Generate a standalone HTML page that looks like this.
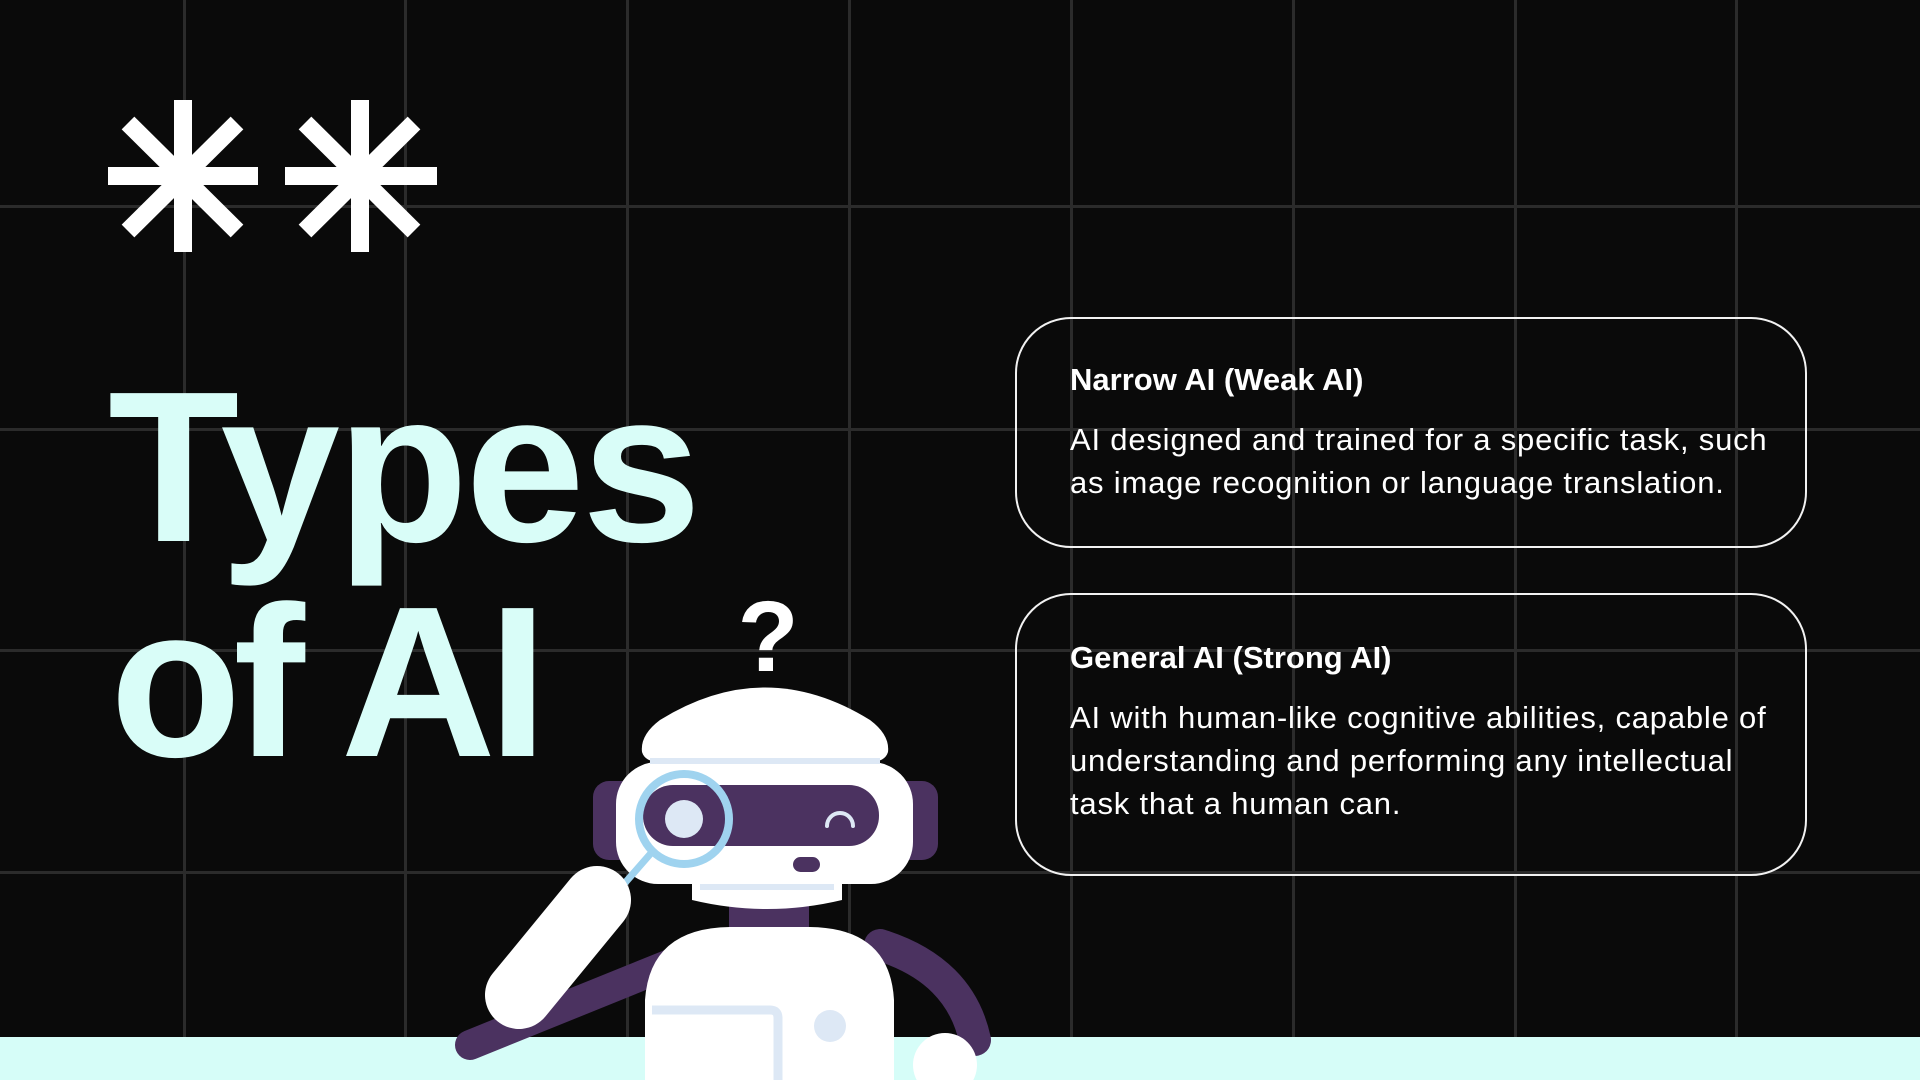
<!DOCTYPE html>
<html><head><meta charset="utf-8"><style>
html,body{margin:0;padding:0;}
body{width:1920px;height:1080px;overflow:hidden;background:#0a0a0a;position:relative;font-family:"Liberation Sans",sans-serif;}
.v{position:absolute;top:0;width:3px;height:1080px;background:#2b2b2b;}
.h{position:absolute;left:0;height:3px;width:1920px;background:#2b2b2b;}
.big{position:absolute;color:#d9fdf8;font-weight:bold;font-size:215px;letter-spacing:-6px;white-space:nowrap;line-height:1;}
.card{position:absolute;left:1015px;width:792px;border:2px solid #f2f2f2;border-radius:56px;box-sizing:border-box;}
.t{position:absolute;color:#fff;white-space:nowrap;}
.tt{font-weight:bold;font-size:31px;}
.bd{font-size:31px;letter-spacing:0.8px;}
</style></head><body>
<div class="v" style="left:183px"></div><div class="v" style="left:404px"></div><div class="v" style="left:626px"></div><div class="v" style="left:848px"></div><div class="v" style="left:1070px"></div><div class="v" style="left:1292px"></div><div class="v" style="left:1514px"></div><div class="v" style="left:1735px"></div>
<div class="h" style="top:205px"></div><div class="h" style="top:428px"></div><div class="h" style="top:649px"></div><div class="h" style="top:871px"></div>

<svg style="position:absolute;left:0;top:0" width="1920" height="1080">
<g stroke="#fff" stroke-width="18">
<line x1="183" y1="100" x2="183" y2="252"/><line x1="108" y1="176" x2="258" y2="176"/>
<line x1="128" y1="123" x2="237" y2="231"/><line x1="237" y1="123" x2="128" y2="231"/>
<line x1="360" y1="100" x2="360" y2="252"/><line x1="285" y1="176" x2="437" y2="176"/>
<line x1="305" y1="123" x2="414" y2="231"/><line x1="414" y1="123" x2="305" y2="231"/>
</g>
</svg>

<div class="big" style="left:108px;top:359px;letter-spacing:-3px">Types</div>
<div class="big" style="left:110px;top:574px;letter-spacing:-8px">of AI</div>

<div class="card" style="top:317px;height:231px"></div>
<div class="card" style="top:593px;height:283px"></div>
<div class="t tt" style="left:1070px;top:362px">Narrow AI (Weak AI)</div>
<div class="t bd" style="left:1070px;top:422px">AI designed and trained for a specific task, such</div>
<div class="t bd" style="left:1070px;top:465px">as image recognition or language translation.</div>
<div class="t tt" style="left:1070px;top:640px">General AI (Strong AI)</div>
<div class="t bd" style="left:1070px;top:700px">AI with human-like cognitive abilities, capable of</div>
<div class="t bd" style="left:1070px;top:743px">understanding and performing any intellectual</div>
<div class="t bd" style="left:1070px;top:786px">task that a human can.</div>

<div style="position:absolute;left:0;top:1037px;width:1920px;height:43px;background:#d6fdf8"></div>

<svg style="position:absolute;left:0;top:0" width="1920" height="1080">
<text x="768" y="671" font-family="Liberation Sans" font-weight="bold" font-size="100" fill="#fff" text-anchor="middle">?</text>
<path d="M880 945 Q960 970 975 1040" stroke="#4b3260" stroke-width="32" fill="none" stroke-linecap="round"/>
<path d="M680 960 L470 1045" stroke="#4b3260" stroke-width="30" stroke-linecap="round" fill="none"/>
<rect x="729" y="905" width="80" height="30" fill="#4b3260"/>
<path d="M645 1080 L645 1000 Q650 928 730 927 L810 927 Q890 928 894 1000 L894 1080 Z" fill="#fff"/>
<path d="M652 1010 L770 1010 Q778 1010 778 1018 L778 1080" stroke="#dde8f5" stroke-width="9" fill="none"/>
<circle cx="830" cy="1026" r="16" fill="#dde8f5"/>
<path d="M692 884 L842 884 L842 900 Q767 918 692 900 Z" fill="#fff"/>
<rect x="700" y="884" width="134" height="6" fill="#dde8f5"/>
<rect x="593" y="781" width="345" height="79" rx="16" fill="#4b3260"/>
<rect x="616" y="762" width="297" height="122" rx="42" fill="#fff"/>
<path d="M642 752 Q640 735 660 720 Q765 655 870 720 Q890 735 888 752 Q885 762 870 762 L660 762 Q645 762 642 752 Z" fill="#fff"/>
<rect x="650" y="758" width="230" height="6" fill="#dde8f5"/>
<rect x="643" y="785" width="236" height="61" rx="30" fill="#4b3260"/>
<circle cx="684" cy="819" r="19" fill="#dde8f5"/>
<path d="M827 826 A13 13 0 0 1 853 826" stroke="#dde8f5" stroke-width="4" fill="none" stroke-linecap="round"/>
<rect x="793" y="857" width="27" height="15" rx="7.5" fill="#4b3260"/>
<line x1="652" y1="852" x2="610" y2="900" stroke="#9fd3ef" stroke-width="7"/>
<circle cx="684" cy="819" r="45" stroke="#9fd3ef" stroke-width="8" fill="none"/>
<line x1="519" y1="995" x2="597" y2="900" stroke="#fff" stroke-width="68" stroke-linecap="round"/>
<circle cx="945" cy="1065" r="32" fill="#fff"/>
</svg>
</body></html>
